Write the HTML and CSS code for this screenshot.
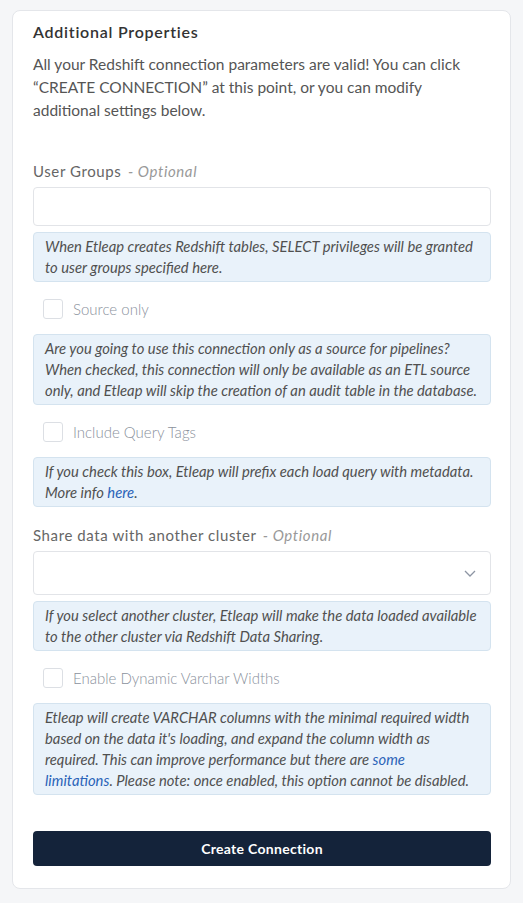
FILE: index.html
```html
<!DOCTYPE html>
<html>
<head>
<meta charset="utf-8">
<link rel="stylesheet" href="styles.css">
</head>
<body>
<div class="card">
  <h2 class="title">Additional Properties</h2>
  <p class="intro">All your Redshift connection parameters are valid! You can click “CREATE CONNECTION” at this point, or you can modify additional settings below.</p>

  <div class="field first">
    <div class="label">User Groups <span class="opt">- Optional</span></div>
    <div class="input"></div>
    <div class="help">When Etleap creates Redshift tables, SELECT privileges will be granted<br>to user groups specified here.</div>
  </div>

  <div class="check"><span class="box"></span><span class="check-label">Source only</span></div>
  <div class="help">Are you going to use this connection only as a source for pipelines?<br>When checked, this connection will only be available as an ETL source<br>only, and Etleap will skip the creation of an audit table in the database.</div>

  <div class="check"><span class="box"></span><span class="check-label">Include Query Tags</span></div>
  <div class="help">If you check this box, Etleap will prefix each load query with metadata.<br>More info <a class="link">here</a>.</div>

  <div class="field">
    <div class="label">Share data with another cluster <span class="opt">- Optional</span></div>
    <div class="select">
      <svg class="chev" width="12" height="7" viewBox="0 0 12 7"><path d="M1 1l5 5 5-5" fill="none" stroke="#8d95a3" stroke-width="1.3"/></svg>
    </div>
    <div class="help">If you select another cluster, Etleap will make the data loaded available<br>to the other cluster via Redshift Data Sharing.</div>
  </div>

  <div class="check"><span class="box"></span><span class="check-label">Enable Dynamic Varchar Widths</span></div>
  <div class="help">Etleap will create VARCHAR columns with the minimal required width<br>based on the data it's loading, and expand the column width as<br>required. This can improve performance but there are <a class="link">some<br>limitations</a>. Please note: once enabled, this option cannot be disabled.</div>

  <button class="btn">Create Connection</button>
</div>
</body>
</html>
```

FILE: styles.css
```css
* { box-sizing: border-box; }
html, body { margin: 0; padding: 0; }
body {
  background: #f5f6f8;
  font-family: Lato, "Noto Sans", sans-serif;
  padding: 10px 12px 0 12px;
  width: 523px;
  height: 903px;
}
.card {
  width: 499px;
  background: #fff;
  border: 1px solid #e4e6ea;
  border-radius: 8px;
  padding: 9px 19px 22px 20px;
}
.title {
  margin: 0;
  font-size: 16px;
  line-height: 24px;
  font-weight: 600;
  color: #333;
  letter-spacing: 0.75px;
}
.intro {
  margin: 9px 0 0 0;
  font-size: 15.5px;
  line-height: 23px;
  color: #555;
}
.field { display: flex; flex-direction: column; margin-top: 18px; }
.field.first { margin-top: 39px; }
.label {
  font-size: 15px;
  line-height: 20px;
  color: #666;
  letter-spacing: 0.6px;
  margin-bottom: 6px;
}
.opt { font-style: italic; color: #999; margin-left: 2px; }
.input {
  height: 39px;
  border: 1px solid #e2e4e8;
  border-radius: 4px;
}
.select {
  height: 44px;
  border: 1px solid #e2e4e8;
  border-radius: 4px;
  display: flex;
  align-items: center;
  justify-content: flex-end;
  padding-right: 14px;
}
.help {
  margin-top: 6px;
  background: #e9f2fa;
  border: 1px solid #d4e3ef;
  border-radius: 4px;
  padding: 3px 3px 3px 11px;
  font-size: 14.8px;
  line-height: 21px;
  font-style: italic;
  color: #505050;
}
.check + .help { margin-top: 15px; }
.check {
  display: flex;
  align-items: center;
  gap: 10px;
  margin: 17px 0 0 10px;
  height: 20px;
}
.box {
  width: 20px;
  height: 20px;
  border: 1px solid #dcdfe4;
  border-radius: 3px;
  background: #fff;
}
.check-label {
  font-size: 15px;
  font-weight: 300;
  color: #8a919c;
}
.link { color: #2a63b8; text-decoration: none; }
.btn {
  display: block;
  width: 100%;
  margin-top: 36px;
  height: 35px;
  background: #14233a;
  color: #fff;
  border: 0;
  border-radius: 4px;
  font-family: Lato, "Noto Sans", sans-serif;
  font-size: 14px;
  font-weight: 700;
  letter-spacing: 0.3px;
}
```
